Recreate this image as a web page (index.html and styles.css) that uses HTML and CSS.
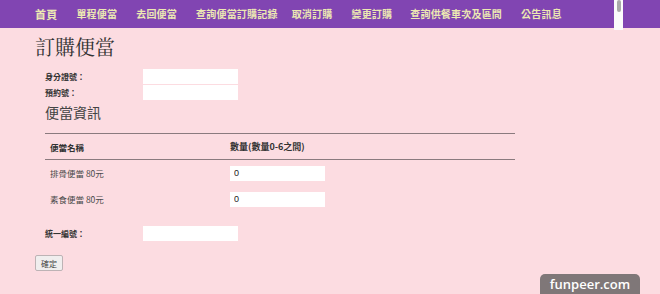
FILE: index.html
```html
<!DOCTYPE html>
<html lang="zh-Hant">
<head>
<meta charset="utf-8">
<link rel="stylesheet" href="styles.css">
</head>
<body>
<nav class="nav">
  <a class="nav-item home">首頁</a>
  <a class="nav-item">單程便當</a>
  <a class="nav-item">去回便當</a>
  <a class="nav-item">查詢便當訂購記錄</a>
  <a class="nav-item">取消訂購</a>
  <a class="nav-item">變更訂購</a>
  <a class="nav-item">查詢供餐車次及區間</a>
  <a class="nav-item">公告訊息</a>
</nav>
<div class="scrollbar"><div class="thumb"></div></div>
<main class="page">
  <h1 class="title">訂購便當</h1>
  <div class="field-rows">
    <div class="field"><label class="label">身分證號：</label><input class="box" type="text"></div>
    <div class="field"><label class="label">預約號：</label><input class="box" type="text"></div>
  </div>
  <h2 class="subtitle">便當資訊</h2>
  <div class="table">
    <div class="thead">
      <span class="col-name">便當名稱</span>
      <span class="col-qty">數量(數量0-6之間)</span>
    </div>
    <div class="trow">
      <span class="col-name item">排骨便當 80元</span>
      <span class="col-qty"><input class="box qty" type="text" value="0"></span>
    </div>
    <div class="trow">
      <span class="col-name item">素食便當 80元</span>
      <span class="col-qty"><input class="box qty" type="text" value="0"></span>
    </div>
  </div>
  <div class="field tax"><label class="label">統一編號：</label><input class="box" type="text"></div>
  <button class="submit" type="button">確定</button>
</main>
<div class="badge">funpeer.com</div>
</body>
</html>
```
FILE: styles.css
```css
html, body {
  margin: 0;
  padding: 0;
  background: #fcdce1;
  height: 294px;
  overflow: hidden;
}
body {
  font-family: "Noto Sans CJK TC", "Liberation Sans", sans-serif;
  color: #333;
  position: relative;
}
.nav {
  height: 28px;
  background: #8145b2;
  display: flex;
  align-items: center;
  padding-left: 35px;
  gap: 19px;
}
.nav-item {
  color: #ece8b2;
  font-size: 10px;
  font-weight: 700;
  letter-spacing: 0.2px;
  line-height: 1;
  white-space: nowrap;
}
.nav-item.home {
  font-size: 11px;
}
.nav-item:nth-child(5) { margin-left: -5px; }
.nav-item:nth-child(7) { margin-left: -1px; }
.scrollbar {
  position: absolute;
  left: 614px;
  top: 0;
  width: 9px;
  height: 30px;
  background: #fbfbfb;
}
.thumb {
  margin: 0 auto;
  width: 4px;
  height: 12px;
  background: #a9a9a9;
  border-radius: 2px;
}
.page {
  padding-left: 35px;
}
.title {
  margin: 6px 0 0;
  font-family: "Noto Serif CJK TC", "Liberation Serif", "Noto Sans CJK TC", serif;
  font-weight: 400;
  font-size: 20px;
  line-height: 26px;
  color: #333;
}
.field-rows {
  margin-top: 9px;
  padding-left: 10px;
  display: flex;
  flex-direction: column;
  gap: 1px;
}
.field {
  display: flex;
  align-items: center;
  height: 15px;
}
.label {
  width: 98px;
  font-size: 8px;
  font-weight: 700;
  color: #333;
}
.box {
  box-sizing: border-box;
  width: 95px;
  height: 15px;
  border: 0;
  background: #fff;
  padding: 0 4px;
  font-size: 9px;
  font-family: "Liberation Sans", sans-serif;
  color: #222;
  outline: none;
}
.subtitle {
  margin: 2px 0 0 10px;
  font-size: 14px;
  font-weight: 400;
  line-height: 20px;
  color: #444;
}
.table {
  margin: 11px 0 0 10px;
  width: 470px;
}
.thead {
  border-top: 1px solid #8a7a7e;
  border-bottom: 1px solid #8a7a7e;
  height: 25px;
  display: flex;
  align-items: center;
}
.col-name {
  width: 185px;
  padding-left: 5px;
  box-sizing: border-box;
  font-size: 8.5px;
  font-weight: 700;
  color: #333;
}
.thead .col-qty {
  font-size: 9px;
  font-weight: 700;
  color: #333;
}
.trow {
  height: 26px;
  display: flex;
  align-items: center;
}
.item {
  font-weight: 400;
  color: #4a4a4a;
  font-size: 8.5px;
}
.qty {
  display: block;
}
.tax {
  margin-top: 14px;
  padding-left: 10px;
}
.submit {
  margin-top: 14px;
  display: block;
  height: 16px;
  width: 28px;
  padding: 0;
  font-size: 8px;
  font-family: "Noto Sans CJK TC", sans-serif;
  color: #444;
  background: #f0eeee;
  border: 1px solid #bdb3b5;
  border-radius: 2px;
}
.badge {
  position: absolute;
  left: 540px;
  top: 274px;
  width: 100px;
  height: 24px;
  background: #7f7778;
  border-radius: 5px;
  color: #fff;
  font-family: "Open Sans", "Liberation Sans", sans-serif;
  font-weight: 600;
  font-size: 13px;
  line-height: 20px;
  text-align: center;
}
```
